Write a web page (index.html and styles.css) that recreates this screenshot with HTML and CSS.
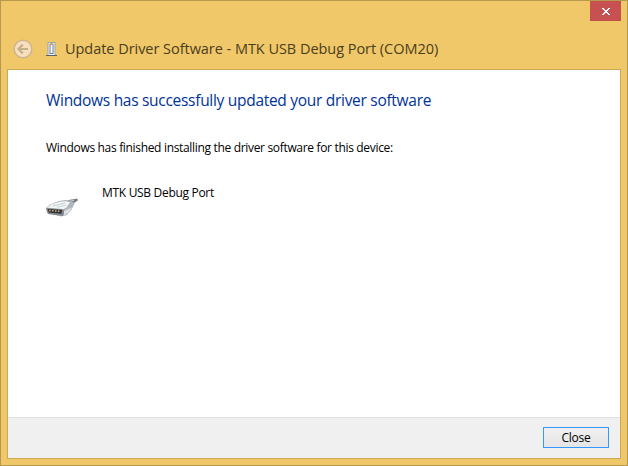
FILE: index.html
```html
<!DOCTYPE html>
<html lang="en">
<head>
<meta charset="utf-8">
<title>Update Driver Software</title>
<link rel="stylesheet" href="styles.css">
</head>
<body>
<div class="window">
  <div class="caption">
    <button class="window-close" aria-label="Close window">
      <svg width="8" height="7" viewBox="0 0 8 7" shape-rendering="crispEdges"><path fill="#fff" d="M0 0h2v1h1v1h2v-1h1v-1h2v1h-1v1h-1v1h-1v1h1v1h1v1h1v1h-2v-1h-1v-1h-2v1h-1v1h-2v-1h1v-1h1v-1h1v-1h-1v-1h-1v-1h-1z"/></svg>
    </button>
  </div>
  <header class="header">
    <svg class="back" width="20" height="20" viewBox="0 0 20 20"><circle cx="10" cy="10" r="8.8" fill="#f8dfbd" stroke="#ceb590" stroke-width="1.5"/><path d="M15 10H5.8M9.8 5.6L5.4 10l4.4 4.4" fill="none" stroke="#c6b08c" stroke-width="2.2"/></svg>
    <svg class="device" width="11" height="16" viewBox="0 0 11 16"><path fill="#98a5b3" d="M1.5 1h8v13h-8z"/><path fill="#eef3f8" d="M2.5 2h6v12h-6z"/><path fill="#747f8c" d="M3.5 3h4v10h-4z"/><path fill="#d9a13f" d="M4.3 2h2.4v2H4.3z"/><path fill="#fff" d="M4.5 4h2v8h-2z"/><path fill="#59616b" d="M0 14h11v1H0z"/></svg>
    <span class="title">Update Driver Software - MTK USB Debug Port (COM20)</span>
  </header>
  <div class="client">
    <main class="content">
      <h1 class="heading">Windows has successfully updated your driver software</h1>
      <p class="message">Windows has finished installing the driver software for this device:</p>
      <div class="device-row">
        <svg class="connector" width="32" height="32" viewBox="0 0 32 32">
          <path d="M17 9l7-2.5 7-1 1 1.4-4 3.4-6 5z" fill="#b9bec2"/>
          <path d="M22 7.6l5-1.2 4.3-.6.5 1.4-3 2-4 1.2z" fill="#74797f"/>
          <path d="M23 8.6l5-1.4" stroke="#d5d9dc"/>
          <path d="M0 15l4-3.6 9-3.4 6-1.1 5 .5 4.8 2.5-3.4 7-5 5.3-5 1.2L1 20z" fill="#b0b7bc"/>
          <path d="M1 14.4l5-3.2 8-2.4 5-.6 5 1.1-3.8 5.5-4.2 2z" fill="#f1f5f6"/>
          <path d="M7 13l12-3M11 14.2l9-2.1" stroke="#c8cfd4"/>
          <path d="M0 15l16 .9 3 2-2.2 5-14.8-2z" fill="#85898d"/>
          <path d="M1.6 16.1l14.6.9-.9 3.8-12.5-1.2z" fill="#303236"/>
          <path d="M3.2 17.4l11.6 1" stroke="#cfb675" stroke-width="1.5" stroke-dasharray="1.5 1.4"/>
          <path d="M18 18l8-3.6-3 4.8-5 3z" fill="#dce1e4"/>
        </svg>
        <span class="device-name">MTK USB Debug Port</span>
      </div>
    </main>
    <footer class="footer"><button class="close-button"><span>Close</span></button></footer>
  </div>
</div>
</body>
</html>
```
FILE: styles.css
```css
* { box-sizing: border-box; }
body { margin: 0; font: 12px/16px "Open Sans", "Noto Sans", sans-serif; color: #000; }
button { margin: 0; padding: 0; font: inherit; color: inherit; }
.window {
  width: 628px; height: 466px; padding: 0 6px 6px;
  display: flex; flex-direction: column;
  background: #f0c869; border: 1px solid #b6984f;
}
.caption { height: 20px; display: flex; justify-content: flex-end; }
.window-close {
  width: 31px; height: 20px; border: 0; background: #c75050;
  display: flex; align-items: center; justify-content: center;
}
.header { height: 48px; display: flex; align-items: center; padding: 7px 0 0 6px; }
.device { margin-left: 13px; }
.title { margin-left: 8px; font-size: 14.5px; line-height: 20px; letter-spacing: -0.04px; color: #4a3d20; white-space: nowrap; }
.client { flex: 1; display: flex; flex-direction: column; background: #fff; border: 1px solid #cba957; }
.content { flex: 1; padding: 19px 38px; }
.heading { margin: 0; font-size: 15.5px; line-height: 22px; font-weight: 400; letter-spacing: -0.29px; color: #003399; white-space: nowrap; }
.message { margin: 29px 0 0; letter-spacing: -0.325px; white-space: nowrap; }
.device-row { display: flex; gap: 24px; margin-top: 29px; }
.device-name { letter-spacing: -0.31px; }
.connector { margin-top: 8px; }
.footer {
  height: 41px; display: flex; justify-content: flex-end; align-items: flex-start;
  padding: 9px 11px 0; background: #f0f0f0; border-top: 1px solid #dfdfdf;
}
.close-button { width: 66px; height: 21px; border: 1px solid #3399ff; background: linear-gradient(#f0f0f0, #e5e5e5); letter-spacing: -0.3px; }
```
